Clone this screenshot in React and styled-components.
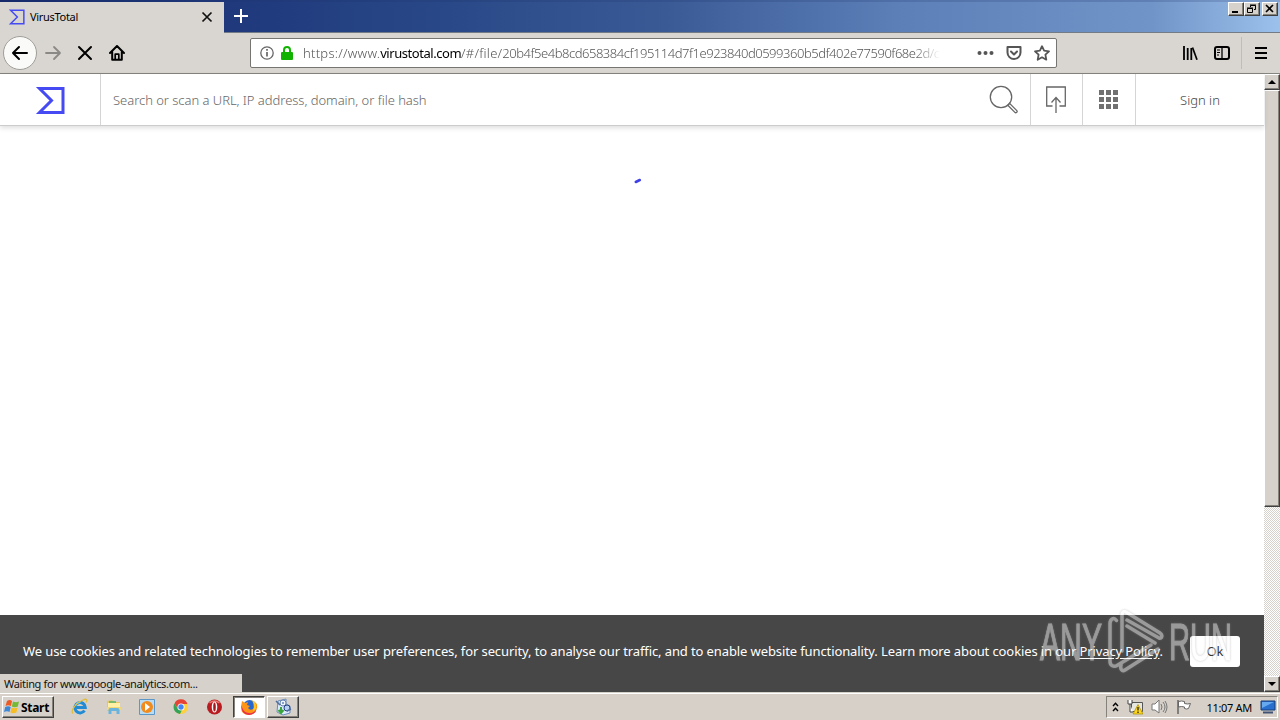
import React from 'react'
import styled, { createGlobalStyle, css } from 'styled-components'

const hash = '20b4f5e4b8cd658384cf195114d7f1e923840d0599360b5df402e77590f68e2d/c'

const App = () => {
  return (
    <Desktop>
      <GlobalStyle />
      <TitleBar>
        <Tab>
          <VtLogo width='17' height='16' viewBox='0 0 30 27' $stroke={2.6} />
          <TabTitle>VirusTotal</TabTitle>
          <svg width='12' height='12' viewBox='0 0 12 12' stroke='#111' strokeWidth='1.7'>
            <path d='M1.5 1.5l9 9M10.500 1.500l-9 9' />
          </svg>
        </Tab>
        <NewTab>
          <svg width='14' height='14' viewBox='0 0 14 14' stroke='#fff' strokeWidth='2'>
            <path d='M7 0v14M0 7h14' />
          </svg>
        </NewTab>
        <WindowButtons>
          <WindowButton><svg width='12' height='10'><path d='M2 8h6' stroke='#000' strokeWidth='2' /></svg></WindowButton>
          <WindowButton $gap>
            <svg width='12' height='10' fill='none' stroke='#000'>
              <path d='M4.500 3V1.500h5v4H8M4 1h6M1.500 4.500h5v4h-5zM1 4h6' />
            </svg>
          </WindowButton>
          <WindowButton><svg width='12' height='10'><path d='M2 1l7 7M9 1L2 8' stroke='#000' strokeWidth='1.6' /></svg></WindowButton>
        </WindowButtons>
      </TitleBar>

      <Toolbar>
        <BackButton>
          <svg width='18' height='16' viewBox='0 0 18 16' fill='none' stroke='#000' strokeWidth='2' strokeLinecap='round' strokeLinejoin='round'>
            <path d='M16 8H2M8 2L2 8l6 6' />
          </svg>
        </BackButton>
        <ToolIcon>
          <svg width='18' height='16' viewBox='0 0 18 16' fill='none' stroke='#8b8986' strokeWidth='1.800' strokeLinecap='round' strokeLinejoin='round'>
            <path d='M2 8h14M10 2l6 6-6 6' />
          </svg>
        </ToolIcon>
        <ToolIcon>
          <svg width='16' height='16' viewBox='0 0 16 16' stroke='#000' strokeWidth='2' strokeLinecap='round'>
            <path d='M2 2l12 12M14 2L2 14' />
          </svg>
        </ToolIcon>
        <ToolIcon>
          <svg width='16' height='16' viewBox='0 0 16 16' fill='none' stroke='#000' strokeWidth='2' strokeLinecap='round' strokeLinejoin='round'>
            <path d='M1 8l7-7 7 7M3.200 7v7.800h9.600V7' />
            <path d='M6.200 14V9.200h3.600V14' strokeWidth='1.700' />
          </svg>
        </ToolIcon>
        <UrlBar>
          <svg width='14' height='14' viewBox='0 0 14 14' fill='none' stroke='#666' strokeWidth='1.300'>
            <circle cx='7' cy='7' r='6.200' />
            <path d='M7 6v4.500M7 3v1.700' strokeWidth='1.700' />
          </svg>
          <Lock width='12' height='14' viewBox='0 0 12 14'>
            <path d='M3 7V4a3 3 0 0 1 6 0v3' fill='none' stroke='#12b300' strokeWidth='2' />
            <rect y='6' width='12' height='8' rx='1' fill='#12b300' />
          </Lock>
          <UrlText>
            <Scheme>https://www.</Scheme><Host>virustotal.com</Host><Scheme>/#/file/</Scheme><Hash>{hash}</Hash>
          </UrlText>
          <svg width='17' height='16' viewBox='0 0 17 16' fill='#555'>
            <circle cx='2.500' cy='8' r='2' /><circle cx='8.500' cy='8' r='2' /><circle cx='14.500' cy='8' r='2' />
          </svg>
          <svg width='16' height='16' viewBox='0 0 16 16' fill='none' stroke='#555' strokeWidth='2' strokeLinecap='round' strokeLinejoin='round'>
            <path d='M1.500 2h13v5.500a6.500 6.500 0 0 1-13 0z' />
            <path d='M5 6.500l3 3 3-3' />
          </svg>
          <svg width='16' height='16' viewBox='0 0 16 16' fill='none' stroke='#555' strokeWidth='1.800' strokeLinejoin='round'>
            <path d='M8 1.200l2.100 4.500 4.900.600-3.600 3.400.9 5L8 12.300l-4.300 2.400.9-5L1 6.300l4.900-.600z' />
          </svg>
        </UrlBar>
        <ToolIcon>
          <svg width='16' height='16' viewBox='0 0 16 16' stroke='#000' strokeWidth='2'>
            <path d='M2 1v14M5.700 3v12M9.300 3v12' strokeWidth='1.800' />
            <path d='M10.500 2.500L15 14.800' strokeWidth='1.700' />
          </svg>
        </ToolIcon>
        <ToolIcon>
          <svg width='16' height='16' viewBox='0 0 16 16' fill='none' stroke='#000' strokeWidth='2'>
            <rect x='1' y='2' width='14' height='12' rx='2' />
            <path d='M8 2v12' strokeWidth='1.300' />
            <path d='M3 5h3M3 7.500h3M3 10h2' strokeWidth='1' />
          </svg>
        </ToolIcon>
        <Separator />
        <MenuIcon><i /><i /><i /></MenuIcon>
      </Toolbar>

      <Viewport>
        <Page>
          <VtHeader>
            <LogoCell><VtLogo width='30' height='27' viewBox='0 0 30 27' $stroke={3} /></LogoCell>
            <SearchCell>
              <Placeholder>Search or scan a URL, IP address, domain, or file hash</Placeholder>
              <svg width='30' height='30' viewBox='0 0 30 30' fill='none' stroke='#666' strokeWidth='1.300'>
                <circle cx='12' cy='12' r='10.700' />
                <path d='M18.800 20.200l1.800-1.800 7.200 7.200c1 1.200-.8 2.900-1.900 1.800z' />
              </svg>
            </SearchCell>
            <IconCell $w={52}>
              <svg width='20' height='28' viewBox='0 0 20 28' fill='none' stroke='#666' strokeWidth='1.300'>
                <path d='M6.500 20H.700V1h18.600v19h-5.800M10 27V12M5.500 16.500L10 11.500l4.500 5' />
              </svg>
            </IconCell>
            <IconCell $w={53}>
              <AppsGrid>{[...Array(9)].map((_, i) => <i key={i} />)}</AppsGrid>
            </IconCell>
            <SignIn>Sign in</SignIn>
          </VtHeader>
          <Loading>
            <svg width='8' height='6' viewBox='0 0 8 6'>
              <path d='M1.800 4l4-2' stroke='#4040e8' strokeWidth='2.600' strokeLinecap='round' />
            </svg>
          </Loading>
          <CookieBar>
            <CookieText>
              We use cookies and related technologies to remember user preferences, for security, to analyse our traffic, and to enable website functionality. Learn more about cookies in our <u>Privacy Policy</u>.
            </CookieText>
            <OkButton>Ok</OkButton>
          </CookieBar>
          <StatusText>Waiting for www.google-analytics.com...</StatusText>
          <Watermark />
        </Page>
        <Scrollbar>
          <ScrollButton><svg width='8' height='4'><path d='M0 4l4-4 4 4z' /></svg></ScrollButton>
          <Thumb />
          <Track />
          <ScrollButton><svg width='8' height='4'><path d='M0 0l4 4 4-4z' /></svg></ScrollButton>
        </Scrollbar>
      </Viewport>

      <Taskbar>
        <StartButton>
          <WindowsFlag />
          <span>Start</span>
        </StartButton>
        <QuickLaunch>
          <IeIcon />
          <FolderIcon />
          <PlayerIcon />
          <ChromeIcon />
          <OperaIcon />
        </QuickLaunch>
        <TaskButton $active><FirefoxIcon /></TaskButton>
        <TaskButton><InstallerIcon /></TaskButton>
        <Tray>
          <svg width='7' height='10' fill='none' stroke='#000' strokeWidth='1.400'><path d='M1 4l2.500-2.700L6 4M1 9l2.500-2.700L6 9' /></svg>
          <NetworkIcon />
          <SoundIcon />
          <FlagIcon />
          <Clock>11:07 AM</Clock>
          <svg width='16' height='14' viewBox='0 0 16 14'>
            <path d='M1 1h14v9H1z' fill='#286fce' stroke='#163d77' />
            <path d='M2 2h12L2 8z' fill='#66a9ef' />
            <path d='M3 12.500h10' stroke='#405575' strokeWidth='2' />
          </svg>
        </Tray>
      </Taskbar>
    </Desktop>
  )
}

const VtLogo = ({ $stroke, ...props }) => (
  <svg {...props} fill='none' stroke='#454af2' strokeWidth={$stroke}>
    <path d='M4.500 1.500h23.500v24H4.500l12-12z' />
  </svg>
)

const Watermark = () => (
  <WatermarkBox>
    <svg width='200' height='64' viewBox='0 0 200 64'>
      <g fill='#fff' stroke='#fff' fontFamily='"Liberation Sans Narrow", "Liberation Sans", sans-serif' fontSize='51'>
        <text x='4' y='50' textLength='62' lengthAdjust='spacingAndGlyphs'>ANY</text>
        <text x='133' y='50' textLength='63' lengthAdjust='spacingAndGlyphs'>RUN</text>
      </g>
      <g fill='none' stroke='#fff' strokeWidth='3.500' strokeLinejoin='round' strokeLinecap='round'>
        <path d='M80.500 10.500c-3-4-6.500-1-6.500 3v38c0 4 4 6 7 4l34-20.500' />
        <path d='M86 41V5c0-3 2-4 4-3l34 21c3 2 2 6-1 5L91 10' />
        <path d='M91 16l28 17M85 55c-1 4 1 7 4 5l33-21' />
      </g>
    </svg>
  </WatermarkBox>
)

const WindowsFlag = () => (
  <svg width='16' height='16' viewBox='0 0 16 16'>
    <path d='M3 2q3-2 5 0L7 7Q4 5.500 1.500 7z' fill='#ed5b25' />
    <path d='M9 2.500q3 1.500 6 0L13.800 7.500q-3 1.500-6 0z' fill='#75b936' />
    <path d='M1.200 8q3-1.500 5.500 0L5.500 13Q3 11.500 0 13z' fill='#3e87d7' />
    <path d='M7.600 8.500q3 1.500 6 0L12.400 13.500q-3 1.500-6 0z' fill='#f6bd25' />
  </svg>
)

const IeIcon = () => (
  <svg width='18' height='18' viewBox='0 0 18 18' fill='none'>
    <path d='M13.500 12.500A5.200 5.200 0 1 1 14.300 9.500H5' stroke='#218bd4' strokeWidth='3' />
    <path d='M4.500 7.500q2-3.500 5-3.200' stroke='#72cbf2' strokeWidth='1.500' />
    <path d='M2 15.500C-1 12 6 4 13 1.500c4-1 3 1.500 2 3' stroke='#e0bd3e' strokeWidth='1.300' />
  </svg>
)

const FolderIcon = () => (
  <svg width='18' height='18' viewBox='0 0 18 18'>
    <path d='M2 3l5-1 2 2h6v9H2z' fill='#e5c663' />
    <path d='M3 5h12v7H3z' fill='#fff0a6' />
    <path d='M4 4h7' stroke='#54b56d' strokeWidth='1.500' />
    <path d='M2 9h14v3H2z' fill='#f3d878' />
    <path d='M3.500 16v-4q0-2 2-2h7q2 0 2 2v4h-3v-3h-5v3z' fill='#69b3df' />
  </svg>
)

const PlayerIcon = () => (
  <svg width='18' height='18' viewBox='0 0 18 18'>
    <path d='M1.500 1.500h15v15h-15z' fill='#b9dcf3' stroke='#5c97c9' />
    <circle cx='9' cy='9' r='6' fill='#f28b1d' />
    <path d='M7 5l5 4-5 4z' fill='#fff' />
  </svg>
)

const ChromeIcon = () => (
  <svg width='18' height='18' viewBox='0 0 18 18'>
    <circle cx='9' cy='9' r='7' fill='#ffd03d' />
    <path d='M2.500 5.500A7 7 0 0 1 15.500 6H9l-3.500 4z' fill='#e54335' />
    <path d='M2.500 5.500L6 11l4 1-2 4A7 7 0 0 1 2.500 5.500z' fill='#34a257' />
    <circle cx='9' cy='9' r='3.500' fill='#fff' />
    <circle cx='9' cy='9' r='2.700' fill='#4285f4' />
  </svg>
)

const OperaIcon = () => (
  <svg width='18' height='18' viewBox='0 0 18 18'>
    <circle cx='9.500' cy='9' r='7.500' fill='#b91c20' />
    <path d='M4.500 5q5-4 10 0' stroke='#e87972' strokeWidth='1.500' fill='none' />
    <ellipse cx='9.500' cy='9' rx='2.800' ry='5.500' fill='#fff' />
    <ellipse cx='9.500' cy='9' rx='1.300' ry='4.500' fill='#a41a1d' />
  </svg>
)

const FirefoxIcon = () => (
  <svg width='18' height='18' viewBox='0 0 18 18'>
    <circle cx='9.500' cy='8.500' r='6.500' fill='#2867ce' />
    <path d='M2 3l3 2 3-1-1 3 3 1-2 2q2 3 5 1 4-3 1-8 4 3 3 7-2 7-8 7-8 0-8-8z' fill='#ff9415' />
    <path d='M1.500 7q1 7 7 8 5 1 8-4-1 6-7.500 6Q2 16 1.500 10z' fill='#e9314c' />
    <path d='M12 2q5 3 4 8-1 3-3 3 2-5-1-11z' fill='#ffc928' />
  </svg>
)

const InstallerIcon = () => (
  <svg width='18' height='18' viewBox='0 0 18 18'>
    <path d='M4 3l8-2v5l4 2v7l-7 2-6-3z' fill='#dceaff' stroke='#6c8bb8' />
    <circle cx='9' cy='5' r='3' fill='#eff6ff' stroke='#6684b5' />
    <circle cx='13' cy='10' r='3' fill='#b6cff4' stroke='#25427c' />
    <circle cx='9' cy='5' r='1' fill='#6684b5' />
    <path d='M2 3l4 4M13 13l4-2' stroke='#506e9a' strokeWidth='1.500' />
    <path d='M7 9v5M4.500 12L7 15l2.500-3' stroke='#39a53b' strokeWidth='2' fill='none' />
  </svg>
)

const NetworkIcon = () => (
  <svg width='16' height='16' viewBox='0 0 16 16'>
    <path d='M4.500 3.500h11v9h-11z' fill='#e7e7e2' stroke='#555' />
    <path d='M1 1v4h4V1M3 5v8h3' fill='#fff' stroke='#444' />
    <path d='M11 5.500l5 9.500H6z' fill='#ffd61c' stroke='#a58900' strokeWidth='.700' />
    <path d='M11 8v3.500M11 12.500V14' stroke='#222' strokeWidth='1.300' />
  </svg>
)

const SoundIcon = () => (
  <svg width='17' height='16' viewBox='0 0 17 16' stroke='#777' fill='none'>
    <path d='M1 5h3l4-4v13l-4-3H1z' fill='#fff' />
    <path d='M10 5q2 3 0 6M12 3q4 5 0 10M14 2q4 6 0 12' />
  </svg>
)

const FlagIcon = () => (
  <svg width='17' height='16' viewBox='0 0 17 16' stroke='#666' fill='#fff'>
    <path d='M2.500 2.500q3-1 6 0v2q3 1 6 0l-2 5q-2 1-4 0V8q-3-1-6 0z' />
    <path d='M2 1v14' strokeWidth='1.500' />
  </svg>
)

const GlobalStyle = createGlobalStyle`
    *{
        box-sizing: border-box;
    }
    body{
        margin: 0;
        overflow: hidden;
    }
    svg{
        display: block;
        flex: none;
    }
`

const raised = css`
    background: #d6d2cb;
    border: 1px solid;
    border-color: #fff #404040 #404040 #fff;
    box-shadow: inset -1px -1px #85817b;
`

const Desktop = styled.div`
    width: 1280px;
    height: 720px;
    display: flex;
    flex-direction: column;
    background: #fff;
    font-family: "Noto Sans", sans-serif;
`

const TitleBar = styled.div`
    height: 33px;
    flex: none;
    display: flex;
    align-items: flex-start;
    background: linear-gradient(90deg, #14296c 0, #1f397c 18%, #294887 35%, #3a5a96 52%, #5c7fb8 70%, #7194c8 90%, #9cc1eb 100%);
    box-shadow: inset 0 2px #1d326b33, inset 0 -1px #737b87;
`

const Tab = styled.div`
    width: 224px;
    height: 31px;
    margin-top: 2px;
    padding: 0 11px 2px 8px;
    display: flex;
    align-items: center;
    background: #d9d6d1;
`

const TabTitle = styled.span`
    flex: 1;
    margin-left: 5px;
    font: 11px "Noto Sans", sans-serif;
    letter-spacing: -.3px;
    color: #000;
`

const NewTab = styled.div`
    flex: 1;
    padding: 9px 10px;
`

const WindowButtons = styled.div`
    display: flex;
    padding: 2px 2px 0 0;
`

const WindowButton = styled.div`
    ${raised}
    width: 16px;
    height: 14px;
    padding: 1px;
    margin-right: ${({ $gap }) => ($gap ? '2px' : 0)};
`

const Toolbar = styled.div`
    height: 41px;
    flex: none;
    display: flex;
    align-items: center;
    padding-left: 3px;
    background: #d9d6d1;
    border-bottom: 1px solid #858580;
`

const BackButton = styled.div`
    width: 34px;
    height: 34px;
    display: grid;
    place-items: center;
    border: 1px solid #a19e99;
    border-radius: 50%;
    background: #fafaf9;
`

const ToolIcon = styled.div`
    width: 32px;
    display: grid;
    place-items: center;
`

const UrlBar = styled.div`
    width: 807px;
    height: 30px;
    margin: 0 117px;
    padding: 0 6px 0 9px;
    display: flex;
    align-items: center;
    gap: 12px;
    flex: none;
    background: #fff;
    border: 1px solid #777571;
    border-radius: 2px;
`

const Lock = styled.svg`
    margin-left: -5px;
`

const UrlText = styled.div`
    width: 638px;
    margin: 0 25px 0 -2px;
    overflow: hidden;
    white-space: nowrap;
    font: 300 13px "Noto Sans", sans-serif;
    color: #555;
    mask-image: linear-gradient(90deg, #000 96%, transparent);
`

const Scheme = styled.span`
    letter-spacing: .26px;
`

const Host = styled.span`
    font-weight: 400;
    letter-spacing: -.45px;
    color: #000;
`

const Hash = styled.span`
    letter-spacing: -.47px;
`

const Separator = styled.div`
    width: 1px;
    height: 32px;
    margin: 0 11px 0 3px;
    background: #c0bdb8;
`

const MenuIcon = styled.div`
    display: grid;
    gap: 3px;
    margin-left: 2px;
    i{
        width: 12px;
        height: 2px;
        background: #000;
    }
`

const Viewport = styled.div`
    height: 618px;
    flex: none;
    display: flex;
`

const Page = styled.main`
    width: 1264px;
    position: relative;
    display: flex;
    flex-direction: column;
`

const VtHeader = styled.header`
    height: 52px;
    flex: none;
    display: flex;
    border-bottom: 1px solid #ccc;
    box-shadow: 0 2px 5px #0002;
`

const LogoCell = styled.div`
    width: 100px;
    padding-top: 1px;
    display: grid;
    place-items: center;
`

const SearchCell = styled.div`
    flex: 1;
    display: flex;
    align-items: center;
    justify-content: space-between;
    padding: 0 11px 0 12px;
    border-left: 1px solid #d5d5d5;
`

const Placeholder = styled.span`
    font: 300 13px "Noto Sans", sans-serif;
    letter-spacing: -.03px;
    color: #666;
`

const IconCell = styled.div`
    width: ${({ $w }) => $w}px;
    padding-right: 1px;
    display: grid;
    place-items: center;
    border-left: 1px solid #d5d5d5;
`

const AppsGrid = styled.div`
    display: grid;
    grid-template-columns: repeat(3, 5px);
    gap: 2px;
    i{
        height: 5px;
        background: #707070;
    }
`

const SignIn = styled.div`
    width: 129px;
    display: grid;
    place-items: center;
    border-left: 1px solid #d5d5d5;
    font: 300 13px "Noto Sans", sans-serif;
    color: #444;
`

const Loading = styled.div`
    flex: 1;
    padding: 52px 0 0 634px;
`

const CookieBar = styled.div`
    height: 77px;
    flex: none;
    display: flex;
    align-items: center;
    justify-content: space-between;
    padding: 0 24px 4px 23px;
    background: #474747;
`

const CookieText = styled.p`
    margin: 0 0 2px;
    white-space: nowrap;
    font: 13px "Noto Sans", sans-serif;
    letter-spacing: -.108px;
    color: #fff;
    u{
        text-underline-offset: 2px;
    }
`

const OkButton = styled.button`
    width: 50px;
    height: 31px;
    padding: 0 0 2px;
    border: 0;
    border-radius: 3px;
    background: #fff;
    font: 13px "Noto Sans", sans-serif;
    color: #333;
`

const StatusText = styled.div`
    position: absolute;
    left: 0;
    bottom: 0;
    width: 242px;
    height: 18px;
    padding-left: 4px;
    background: #d6d2cb;
    font: 11px/19px "Noto Sans", sans-serif;
    letter-spacing: -.34px;
    white-space: nowrap;
    color: #111;
`

const WatermarkBox = styled.div`
    position: absolute;
    left: 1036px;
    top: 536px;
    opacity: .45;
    svg{
        filter: drop-shadow(0 0 1px #888);
    }
`

const Scrollbar = styled.div`
    width: 16px;
    display: flex;
    flex-direction: column;
`

const ScrollButton = styled.div`
    ${raised}
    height: 16px;
    flex: none;
    display: grid;
    place-items: center;
`

const Thumb = styled.div`
    ${raised}
    height: 417px;
    flex: none;
`

const Track = styled.div`
    flex: 1;
    background: repeating-conic-gradient(#d6d2cb 0 25%, #fff 0 50%) 0 0 / 2px 2px;
`

const Taskbar = styled.footer`
    height: 28px;
    flex: none;
    display: flex;
    align-items: center;
    padding: 2px 2px 0 2px;
    background: #d6d0c8;
    box-shadow: inset 0 1px #d3d3ca, inset 0 2px #fff;
`

const StartButton = styled.div`
    ${raised}
    width: 52px;
    height: 22px;
    display: flex;
    align-items: center;
    gap: 1px;
    padding-left: 1px;
    font: bold 12px "Noto Sans", sans-serif;
    letter-spacing: -.3px;
    color: #000;
`

const QuickLaunch = styled.div`
    display: flex;
    gap: 15.600px;
    margin: 0 10px 0 17px;
`

const TaskButton = styled.div`
    ${raised}
    width: 32px;
    height: 22px;
    margin-right: 2px;
    display: grid;
    place-items: center;
    ${({ $active }) => $active && css`
        background: #fff;
        border-color: #404040 #fff #fff #404040;
        box-shadow: inset 1px 1px #85817b;
    `}
`

const Tray = styled.div`
    width: 172px;
    height: 22px;
    margin-left: auto;
    display: flex;
    align-items: center;
    padding: 0 1px 0 5px;
    gap: 8px;
    border: 1px solid;
    border-color: #85817b #fff #fff #85817b;
`

const Clock = styled.span`
    flex: 1;
    text-align: right;
    white-space: nowrap;
    font: 11px "Noto Sans", sans-serif;
    letter-spacing: -.3px;
    color: #000;
`

export default App
